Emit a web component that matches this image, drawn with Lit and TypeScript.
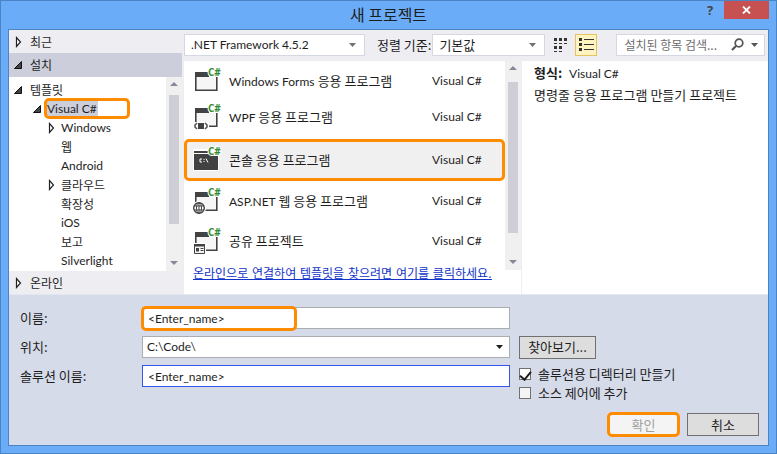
import { LitElement, html, css, svg } from "lit";
import { customElement, property } from "lit/decorators.js";
import { classMap } from "lit/directives/class-map.js";

interface Node { label: string; depth: number; open?: boolean; branch?: boolean; latin?: boolean; current?: boolean }
interface Template { latin?: string; korean: string; icon: string; current?: boolean }

const TREE: Node[] = [
  { label: "템플릿", depth: 0, branch: true, open: true },
  { label: "Visual C#", depth: 1, branch: true, open: true, latin: true, current: true },
  { label: "Windows", depth: 2, branch: true, latin: true },
  { label: "웹", depth: 2 },
  { label: "Android", depth: 2, latin: true },
  { label: "클라우드", depth: 2, branch: true },
  { label: "확장성", depth: 2 },
  { label: "iOS", depth: 2, latin: true },
  { label: "보고", depth: 2 },
  { label: "Silverlight", depth: 2, latin: true },
];

const TEMPLATES: Template[] = [
  { latin: "Windows Forms", korean: "응용 프로그램", icon: "forms" },
  { latin: "WPF", korean: "응용 프로그램", icon: "wpf" },
  { korean: "콘솔 응용 프로그램", icon: "console", current: true },
  { latin: "ASP.NET", korean: "웹 응용 프로그램", icon: "web" },
  { korean: "공유 프로젝트", icon: "shared" },
];

const twisty = (open?: boolean) => html`<svg class="twisty" width="10" height="12" viewBox="0 0 10 12" aria-hidden="true">
  ${open ? svg`<path d="M8.500 2.500v7h-7z" fill="#444" stroke="#111"/>` : svg`<path d="M3.500 1.500v9l4-4.500z" fill="#fff" stroke="#222" stroke-width="1.200"/>`}
</svg>`;

const caret = html`<svg class="caret" width="7" height="4" viewBox="0 0 7 4" aria-hidden="true"><path d="M0 0h7L3.500 4z" fill="currentColor"/></svg>`;

@customElement("scroll-rail")
class ScrollRail extends LitElement {
  @property({ type: Number }) before = 6;
  @property({ type: Number }) size = 60;
  static styles = css`
    :host { display: flex; flex-direction: column; align-items: center; width: 16px; box-sizing: border-box; background: #f0f0f1; padding: 5px 0 6px; }
    .track { flex: 1; width: 10px; display: flex; flex-direction: column; padding: 8px 0; }
    .thumb { background: #cdced6; }
  `;
  render() {
    return html`
      <svg width="8" height="4" viewBox="0 0 8 4"><path d="M0 4h8L4 0z" fill="#868999"/></svg>
      <div class="track"><div class="thumb" style="height:${this.size}%;margin-top:${this.before}px"></div></div>
      <svg width="8" height="4" viewBox="0 0 8 4"><path d="M0 0h8L4 4z" fill="#868999"/></svg>`;
  }
}

@customElement("template-icon")
class TemplateIcon extends LitElement {
  @property() kind = "forms";
  static styles = css`
    :host { display: block; width: 30px; height: 30px; }
    svg { display: block; overflow: visible; }
    .lang { font: 700 10px/10px "Open Sans", sans-serif; fill: #388a34; stroke: #fff; stroke-width: 2px; paint-order: stroke; }
  `;
  badge() {
    switch (this.kind) {
      case "wpf": return svg`<path d="M0 20h16v8H0z" fill="#fff"/><path d="M4 21l-2 2v2l2 2M12 21l2 2v2l-2 2" fill="none" stroke="#555" stroke-width="1.600"/><path d="M5 21h6v6H5z" fill="#424242"/>`;
      case "web": return svg`<circle cx="6" cy="22" r="7" fill="#fff"/><circle cx="6" cy="22" r="5.300" fill="#fff" stroke="#424242" stroke-width="1.400"/><ellipse cx="6" cy="22" rx="2.500" ry="5.300" fill="none" stroke="#424242"/><path d="M1 20h10M1 24h10M6 17v10" stroke="#424242"/>`;
      case "shared": return svg`<path d="M0 17h13v12H0z" fill="#fff"/><path d="M1.500 18.500h10v9h-10z" fill="#f4f4f4" stroke="#424242"/><path d="M1 18h11v2.500H1z" fill="#424242"/><path d="M3 22h3v3.500H3zM7.500 22h3v1h-3zM7.500 24h3v1h-3z" fill="#424242"/>`;
      default: return null;
    }
  }
  render() {
    const body = this.kind === "console"
      ? svg`<path d="M0 4h26v22H0z" fill="#fff"/><path d="M1 6h14v2H1zM1 9h24v16H1z" fill="#424242"/><path d="M9 14H7v3h2M11 14v1M11 16v1M13 13.500l2 4" fill="none" stroke="#fff"/>`
      : svg`<path d="M2 7h22v18H2z" fill="#f6f6f6"/><path d="M2 6h14v5H2z" fill="#424242"/><path d="M2.800 10v14.200h21V10" fill="none" stroke="#424242" stroke-width="1.600"/>`;
    return html`<svg width="30" height="30" viewBox="0 0 30 30" aria-hidden="true">${body}${this.badge()}<text class="lang" x="15" y="10">C#</text></svg>`;
  }
}

@customElement("app-root")
class AppRoot extends LitElement {
  static styles = css`
    * { box-sizing: border-box; }
    :host { display: flex; flex-direction: column; min-height: 100vh; box-sizing: border-box; background: #6aacf8; border: 1px solid #4b84c4; padding: 0 7px 7px; color: #1e1e1e; font: 13px/18px "Noto Sans CJK KR", sans-serif; }
    button, input, select { font: inherit; color: inherit; margin: 0; border-radius: 0; }
    .latin { font-family: Lato, "Noto Sans CJK KR", sans-serif; font-size: 12px; }
    .title { height: 28px; display: grid; grid-template-columns: 1fr auto 1fr; }
    .title h1 { grid-column: 2; margin: 0; font-size: 16px; line-height: 26px; font-weight: 400; }
    .chrome { display: flex; justify-content: flex-end; align-items: flex-start; }
    .chrome button { border: 0; height: 18px; padding: 0; display: grid; place-items: center; }
    .help { width: 28px; background: none; font: 700 13px "Open Sans", sans-serif; color: #444; }
    .close { width: 45px; background: #c75050; }
    .frame { flex: 1; display: flex; flex-direction: column; border: 1px solid #4b84c4; background: #d6dbe9; }
    .browser { display: flex; background: #eeeef2; border-bottom: 1px solid #e4e7f0; }
    .side { width: 173px; display: flex; flex-direction: column; }
    .section { height: 23px; border: 0; background: none; padding: 0 0 0 4px; display: flex; align-items: center; gap: 7px; text-align: left; font-size: 12px; }
    .section.open { height: 24px; background: #cccedb; }
    .tree-area { display: flex; flex: 1; background: #fff; }
    .tree { flex: 1; list-style: none; margin: 0; padding: 4px 0 0 4px; }
    .tree li { height: 19px; display: flex; align-items: center; gap: 7px; position: relative; font-size: 12px; }
    .tree li.d0 { height: 18px; }
    .tree li.d1 { padding-left: 19px; gap: 4px; }
    .tree li.d2 { padding-left: 33px; gap: 5px; }
    .twisty, .blank { width: 10px; flex: none; }
    .twisty { display: block; }
    .current-node { background: #cccedb; line-height: 16px; padding: 0 1px; }
    .callout { position: absolute; border: 3px solid #ff8c00; border-radius: 5px; pointer-events: none; }
    .tree .callout { inset: -1px 36px -1px 31px; }
    .main { flex: 1; min-width: 0; margin-left: 2px; }
    .tools { height: 31px; display: flex; align-items: center; padding: 0 3px 2px 0; }
    .combo { position: relative; display: block; }
    .combo select { appearance: none; width: 100%; height: 22px; border: 1px solid #d5d7e3; background: #fff; padding: 0 20px 0 6px; outline: 0; }
    .combo .caret { position: absolute; right: 9px; top: 9px; color: #717171; }
    .framework { width: 181px; margin-right: 12px; }
    .sort { width: 113px; margin-left: 1px; }
    .view { width: 22px; height: 22px; border: 0; padding: 0; background: none; display: grid; place-items: center; margin-left: 5px; }
    .view.on { background: #fdf4bf; border: 1px solid #e5c365; margin-left: 3px; }
    .search { flex: 1; min-width: 0; margin-left: 19px; height: 22px; display: flex; align-items: center; background: #fff; border: 1px solid #d5d7e3; padding: 0 6px 0 7px; gap: 7px; }
    .search input { flex: 1; min-width: 0; border: 0; padding: 0; outline: 0; background: none; font-size: 12px; }
    .search input::placeholder { color: #6d6d6d; opacity: 1; }
    .search .caret { color: #555; }
    .panes { display: flex; background: #fff; height: 233px; }
    .list-pane { width: 338px; position: relative; border-right: 1px solid #eeeef2; }
    .list { display: flex; }
    .list ul { flex: 1; list-style: none; margin: 0; padding: 2px 0 0; }
    .list li { height: 40px; display: grid; grid-template-columns: 36px 1fr 73px; align-items: center; padding-left: 9px; }
    .list li.compact { height: 36px; }
    .list li.current { height: 42px; margin-top: 4px; background: #f0f0f0; border: 3px solid #ff8c00; border-radius: 5px; padding-left: 6px; grid-template-columns: 36px 1fr 70px; }
    .list scroll-rail { height: 209px; }
    .online { display: block; margin: -8px 0 0 9px; position: relative; white-space: nowrap; font: 12px/24px "DejaVu Sans", "Noto Sans CJK KR", sans-serif; color: #1233c8; }
    .detail { flex: 1; padding: 1px 12px; }
    .detail p { margin: 0; line-height: 21px; }
    .detail b { font-weight: 700; margin-right: 4px; }
    form { flex: 1; display: flex; flex-direction: column; padding: 12px 9px 8px 11px; }
    .fields { display: grid; grid-template-columns: 122px minmax(0, 368px) 1fr; grid-template-rows: 22px 22px 22px 14px; row-gap: 7px; align-items: center; }
    .fields > label { grid-column: 1; }
    .field { position: relative; grid-column: 2; }
    .field input, .field select { display: block; width: 100%; height: 22px; border: 1px solid #abadb3; background: #fff; padding: 0 5px; outline: 0; }
    .field input.focus { border-color: #3354ee; }
    .field.combo select { padding-left: 4px; }
    .field.combo .caret { right: 7px; color: #1e1e1e; }
    .field .callout { inset: -1px auto -2px -1px; width: 156px; }
    .push { height: 23px; border: 1px solid #707070; background: #dddddd; padding: 0; width: 72px; }
    .browse { width: 77px; margin-left: 9px; grid-column: 3; }
    .checks { grid-area: 3 / 3 / 5 / 4; align-self: start; margin: -1px 0 0 9px; }
    .checks label { display: flex; align-items: center; gap: 7px; height: 19px; }
    .checks input { appearance: none; width: 12px; height: 12px; border: 1px solid #707070; background: #f4f4f4; display: flex; justify-content: center; align-items: flex-start; }
    .checks input:checked { background: #fff; }
    .checks input:checked::before { content: ""; width: 5px; height: 9px; border: solid #1e1e1e; border-width: 0 2px 2px 0; transform: rotate(40deg); }
    .actions { margin-top: auto; display: flex; justify-content: flex-end; align-items: center; gap: 7px; }
    .ok { width: 73px; height: 25px; border: 3px solid #ff8c00; border-radius: 5px; background: #f4f4f4; color: #a0a0a0; line-height: 17px; padding: 0; }
  `;

  render() {
    return html`
      <header class="title">
        <h1>새 프로젝트</h1>
        <div class="chrome">
          <button class="help" aria-label="도움말">?</button>
          <button class="close" aria-label="닫기"><svg width="9" height="8" viewBox="0 0 9 8"><path d="M1 .500l7 7M8 .500l-7 7" stroke="#fff" stroke-width="1.800"/></svg></button>
        </div>
      </header>
      <div class="frame">
        <section class="browser">
          <nav class="side">
            <button class="section">${twisty()}최근</button>
            <button class="section open">${twisty(true)}설치</button>
            <div class="tree-area">
              <ul class="tree">${TREE.map((n) => html`
                <li class=${classMap({ [`d${n.depth}`]: true, latin: !!n.latin })}>
                  ${n.branch ? twisty(n.open) : html`<span class="blank"></span>`}
                  <span class=${classMap({ "current-node": !!n.current })}>${n.label}</span>
                  ${n.current ? html`<span class="callout"></span>` : null}
                </li>`)}</ul>
              <scroll-rail .before=${1} .size=${81}></scroll-rail>
            </div>
            <button class="section">${twisty()}온라인</button>
          </nav>
          <div class="main">
            <div class="tools">
              <div class="combo framework"><select class="latin" aria-label="프레임워크"><option>.NET Framework 4.5.2</option></select>${caret}</div>
              <label for="sort">정렬 기준:</label>
              <div class="combo sort"><select id="sort"><option>기본값</option></select>${caret}</div>
              <button class="view" aria-label="작은 아이콘"><svg width="14" height="14" viewBox="0 0 14 14" fill="#333"><path d="M0 0h3v3H0zM5 0h3v3H5zM10 0h3v3h-3zM0 5h3v1H0zM5 5h3v1H5zM10 5h3v1h-3zM0 8h3v3H0zM5 8h3v3H5zM0 13h3v1H0zM5 13h3v1H5z"/></svg></button>
              <button class="view on" aria-label="목록"><svg width="15" height="13" viewBox="0 0 15 13"><path d="M0 0h3v3H0zM0 5h3v3H0zM0 10h3v3H0zM5 1h10v1H5zM5 6h10v1H5zM5 11h10v1H5z" fill="#333"/></svg></button>
              <div class="search">
                <input type="text" aria-label="검색" placeholder="설치된 항목 검색...">
                <svg width="13" height="13" viewBox="0 0 13 13" fill="none" stroke="#555"><circle cx="8" cy="5" r="3.800" stroke-width="1.700"/><path d="M5.300 7.700L1 12" stroke-width="2.200"/></svg>
                ${caret}
              </div>
            </div>
            <div class="panes">
              <div class="list-pane">
                <div class="list">
                  <ul>${TEMPLATES.map((t, i) => html`
                    <li class=${classMap({ compact: i < 2, current: !!t.current })}>
                      <template-icon .kind=${t.icon}></template-icon>
                      <span>${t.latin ? html`<span class="latin">${t.latin} </span>` : null}${t.korean}</span>
                      <span class="latin">Visual C#</span>
                    </li>`)}</ul>
                  <scroll-rail .before=${4} .size=${87}></scroll-rail>
                </div>
                <a class="online" href="#online">온라인으로 연결하여 템플릿을 찾으려면 여기를 클릭하세요.</a>
              </div>
              <div class="detail">
                <p><b>형식:</b> <span class="latin">Visual C#</span></p>
                <p>명령줄 응용 프로그램 만들기 프로젝트</p>
              </div>
            </div>
          </div>
        </section>
        <form>
          <div class="fields">
            <label for="name">이름:</label>
            <div class="field"><input id="name" class="latin" value="&lt;Enter_name&gt;"><span class="callout"></span></div>
            <label for="place">위치:</label>
            <div class="field combo"><select id="place" class="latin"><option>C:\\Code\\</option></select>${caret}</div>
            <button type="button" class="push browse">찾아보기...</button>
            <label for="solution">솔루션 이름:</label>
            <div class="field"><input id="solution" class="latin focus" value="&lt;Enter_name&gt;"></div>
            <div class="checks">
              <label><input type="checkbox" checked>솔루션용 디렉터리 만들기</label>
              <label><input type="checkbox">소스 제어에 추가</label>
            </div>
          </div>
          <div class="actions">
            <button type="button" class="ok" disabled>확인</button>
            <button type="button" class="push">취소</button>
          </div>
        </form>
      </div>`;
  }
}
